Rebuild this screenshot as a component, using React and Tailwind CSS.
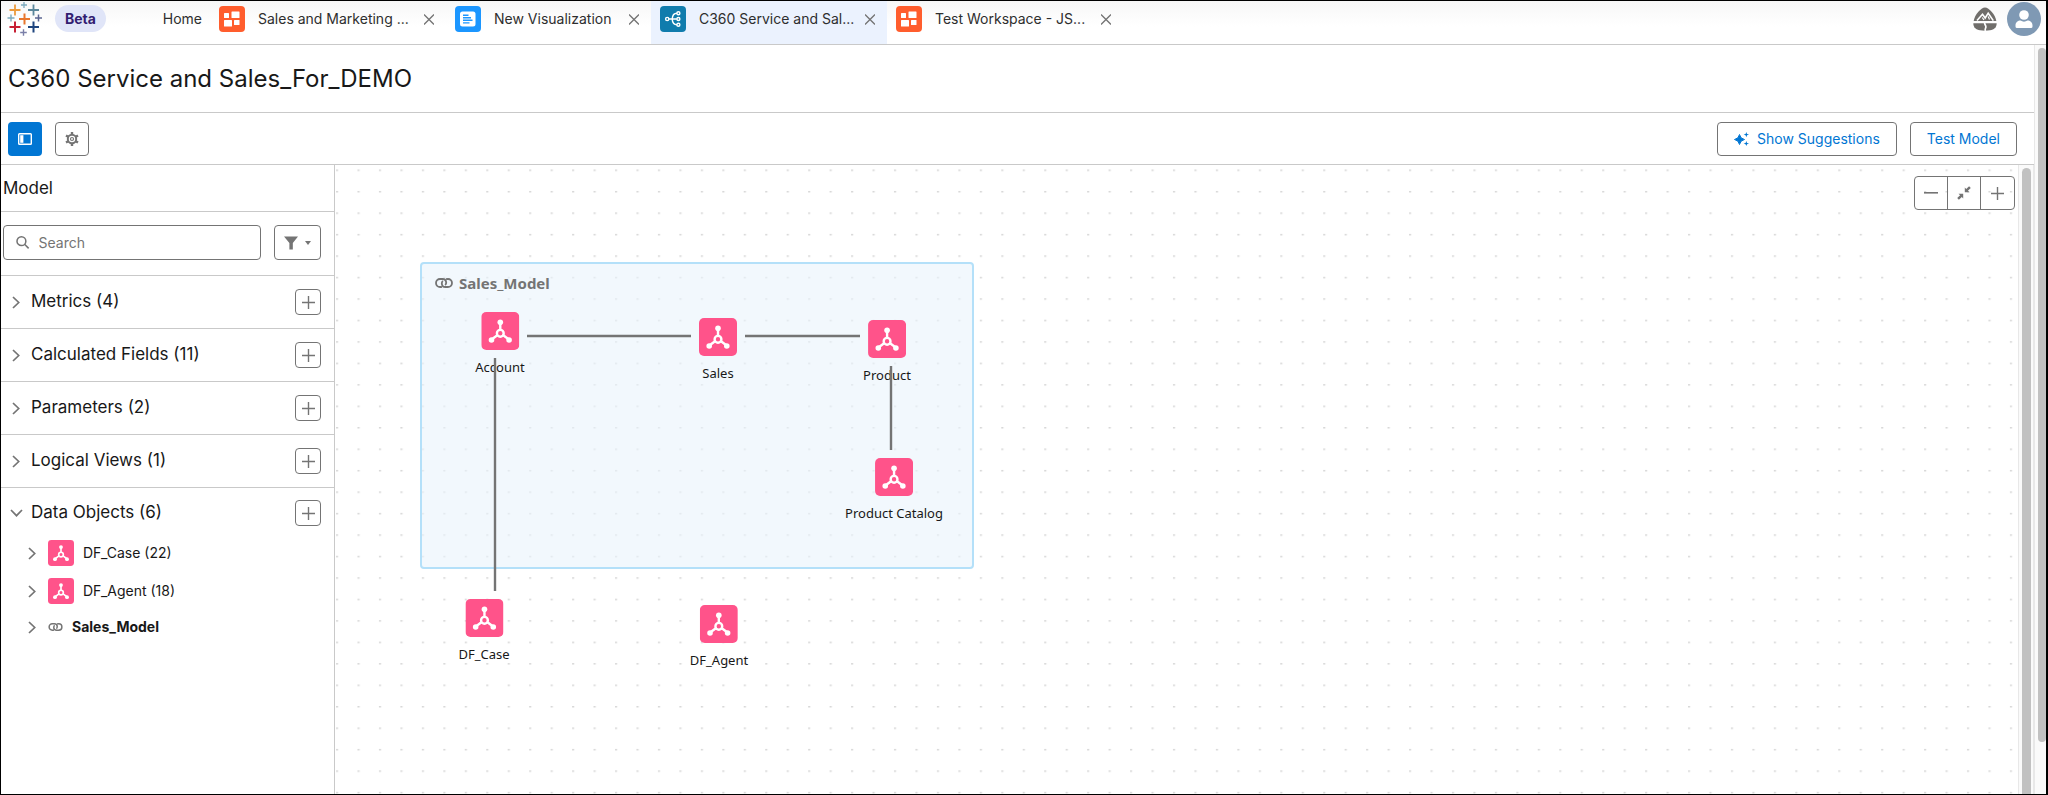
import React, { useState } from "react";

const tabs = [
  { id: 1, label: "Sales and Marketing ...", icon: "workspace" },
  { id: 2, label: "New Visualization", icon: "viz", short: true },
  { id: 3, label: "C360 Service and Sal...", icon: "model" },
  { id: 4, label: "Test Workspace - JS...", icon: "workspace" },
];

const sections = [
  { name: "Metrics", count: 4 },
  { name: "Calculated Fields", count: 11 },
  { name: "Parameters", count: 2 },
  { name: "Logical Views", count: 1 },
];

const nodes = [
  { name: "Account", x: 165, y: 147 },
  { name: "Sales", x: 383, y: 153 },
  { name: "Product", x: 552, y: 155 },
  { name: "Product Catalog", x: 559, y: 293 },
  { name: "DF_Case", x: 149, y: 434 },
  { name: "DF_Agent", x: 384, y: 440 },
];

const edges = [
  { x1: 192, y1: 171, x2: 356, y2: 171 },
  { x1: 410, y1: 171, x2: 525, y2: 171 },
  { x1: 160, y1: 193, x2: 160, y2: 426 },
  { x1: 556, y1: 201, x2: 556, y2: 285 },
];

const logoMarks = [
  { x: 17, y: 4, r: 3, w: 1.3, color: "#7ba9bd" },
  { x: 8, y: 9, r: 5.5, w: 1.8, color: "#eb9a3c" },
  { x: 26.5, y: 9, r: 5.5, w: 1.8, color: "#5b879b" },
  { x: 4, y: 17, r: 3.5, w: 1.4, color: "#7ba9bd" },
  { x: 17.5, y: 18, r: 5.5, w: 2, color: "#e8762c" },
  { x: 31.5, y: 17, r: 3.5, w: 1.5, color: "#5b6591" },
  { x: 8, y: 26, r: 5.5, w: 2, color: "#c72035" },
  { x: 26.5, y: 26, r: 5.5, w: 2, color: "#1f457e" },
  { x: 16.5, y: 31.5, r: 3.3, w: 1.4, color: "#7a7fa8" },
];

const Logo = () => (
  <svg width="36" height="36" viewBox="0 0 36 36" aria-hidden="true">
    {logoMarks.map((m) => (
      <path
        key={`${m.x}-${m.y}`}
        d={`M${m.x - m.r} ${m.y}H${m.x + m.r}M${m.x} ${m.y - m.r}V${m.y + m.r}`}
        stroke={m.color}
        strokeWidth={m.w}
      />
    ))}
  </svg>
);

const WorkspaceIcon = () => (
  <svg width="26" height="26" viewBox="0 0 26 26" className="shrink-0" aria-hidden="true">
    <rect width="26" height="26" rx="4" fill="#ff5d2d" />
    <g fill="#fff">
      <rect x="5" y="7" width="5" height="5" rx="0.5" />
      <rect x="12.5" y="5.5" width="8" height="6.5" rx="0.5" />
      <rect x="5" y="14" width="8" height="6.5" rx="0.5" />
      <rect x="15" y="14" width="5.5" height="5" rx="0.5" />
    </g>
  </svg>
);

const VizIcon = () => (
  <svg width="26" height="26" viewBox="0 0 26 26" className="shrink-0" aria-hidden="true">
    <rect width="26" height="26" rx="4" fill="#1b96ff" />
    <rect x="5" y="5.5" width="15.5" height="15" rx="2.5" fill="#fff" />
    <path
      d="M8 9.2H13.5M8 11.8H16M8 14.3H17.5M8 16.9H14.5"
      stroke="#1b96ff"
      strokeWidth="1.4"
    />
  </svg>
);

const ModelIcon = () => (
  <svg width="26" height="26" viewBox="0 0 26 26" className="shrink-0" aria-hidden="true">
    <rect width="26" height="26" rx="4" fill="#107cad" />
    <g fill="none" stroke="#fff" strokeWidth="1.4">
      <circle cx="7.2" cy="13" r="1.6" />
      <circle cx="18.4" cy="7.2" r="1.5" />
      <circle cx="18.4" cy="13" r="1.5" />
      <circle cx="18.4" cy="18.8" r="1.5" />
      <path d="M9 13H16.8M17 7.2C13.5 7.2 12.4 9 12.2 13C12.4 17 13.5 18.8 17 18.8" />
    </g>
  </svg>
);

const tabIcons = { workspace: WorkspaceIcon, viz: VizIcon, model: ModelIcon };

const ObjectIcon = ({ size }) => (
  <svg width={size} height={size} viewBox="0 0 38 38" className="block shrink-0" aria-hidden="true">
    <rect width="38" height="38" rx="5" fill="#ff538a" />
    <g stroke="#fff" strokeWidth="2.4" fill="none">
      <circle cx="19" cy="21.3" r="3.4" />
      <path d="M19 17.8V10M16 23.3L10 27.8M22 23.3L28 27.8" />
    </g>
    <g fill="#fff">
      <circle cx="19" cy="10.3" r="2.8" />
      <circle cx="10.2" cy="28" r="2.8" />
      <circle cx="27.8" cy="28" r="2.8" />
    </g>
  </svg>
);

const LinkIcon = ({ className }) => (
  <svg viewBox="0 0 18 10" className={className} fill="none" stroke="currentColor" strokeWidth="1.8" aria-hidden="true">
    <path d="M7 8.8C6.3 9 5.8 9 5 9A4 4 0 0 1 5 1H7.5C10 1 11.2 2.8 11.2 4.8C11.2 5.8 10.8 6.6 10 7" />
    <path d="M11 1.2C11.7 1 12.2 1 13 1A4 4 0 0 1 13 9H10.5C8 9 6.8 7.2 6.8 5.2C6.8 4.2 7.2 3.4 8 3" />
  </svg>
);

const Chevron = ({ open }) =>
  open ? (
    <svg width="13" height="8" viewBox="0 0 13 8" fill="none" stroke="#747474" strokeWidth="1.7" aria-hidden="true">
      <path d="M1 1L6.5 6.7L12 1" />
    </svg>
  ) : (
    <svg width="8" height="13" viewBox="0 0 8 13" fill="none" stroke="#747474" strokeWidth="1.7" aria-hidden="true">
      <path d="M1 1L6.7 6.5L1 12" />
    </svg>
  );

const Plus = () => (
  <svg width="13" height="13" viewBox="0 0 13 13" stroke="#747474" strokeWidth="1.4" aria-hidden="true">
    <path d="M6.5 0V13M0 6.5H13" />
  </svg>
);

const Tab = ({ tab, active, onSelect }) => {
  const Icon = tabIcons[tab.icon];
  return (
    <div className={`flex h-full items-start pt-[5px] pl-[9px] pr-3 ${active ? "bg-[#ebf2fe]" : ""}`}>
      <button
        onClick={() => onSelect(tab.id)}
        className={`flex items-center gap-[13px] whitespace-nowrap text-left ${tab.short ? "w-[174px]" : "w-[205px]"}`}
      >
        <Icon />
        <span>{tab.label}</span>
      </button>
      <button aria-label={`Close ${tab.label}`} className="flex h-[26px] w-[10px] items-center">
        <svg width="10" height="11" viewBox="0 0 10 11" stroke="#747474" strokeWidth="1.3" aria-hidden="true">
          <path d="M0 0.5L10 10.5M10 0.5L0 10.5" />
        </svg>
      </button>
    </div>
  );
};

const TopBar = () => {
  const [activeTab, setActiveTab] = useState(3);

  return (
    <header className="flex h-11 shrink-0 items-start border-b border-[#c9c9c9] bg-linear-to-b from-[#f7f7f7] to-white to-60% text-sm text-[#2e2e2e]">
      <div className="flex w-[209px] items-start pl-[6px]">
        <Logo />
        <span className="ml-3 mt-1 flex h-[27px] items-center rounded-full bg-[#e0e5f8] px-[10px] font-bold text-[#321d71]">
          Beta
        </span>
        <a href="#home" className="ml-auto mr-2 pt-2">
          Home
        </a>
      </div>
      <nav className="flex h-full">
        {tabs.map((tab) => (
          <Tab key={tab.id} tab={tab} active={tab.id === activeTab} onSelect={setActiveTab} />
        ))}
      </nav>
      <div className="ml-auto flex items-center gap-[10px] pr-[5px] pt-px">
        <button aria-label="Guidance">
          <svg width="24" height="24" viewBox="0 0 24 24" className="block" aria-hidden="true">
            <path d="M12 0.5C16 0.5 22.5 8 23.3 14H0.7C1.5 8 8 0.5 12 0.5Z" fill="#706e6b" />
            <path d="M0.3 16.2H23.7C23.7 20.5 21 22.5 17 23.3C14 23.8 10 23.8 7 23.3C3 22.5 0.3 20.5 0.3 16.2Z" fill="#706e6b" />
            <path d="M4 13.6L9.5 7.2L12.2 11L15.2 6.2L20.3 13.6" fill="none" stroke="#fff" strokeWidth="1.6" />
            <path d="M9.3 10.5L11 13M15.2 9.5L16.5 12.5" stroke="#fff" strokeWidth="1.2" />
            <path d="M12 15C10.5 17.5 14 18.5 12.6 21C12.2 22 12 23 12.4 24" fill="none" stroke="#fff" strokeWidth="1.7" />
          </svg>
        </button>
        <button aria-label="Profile">
          <svg width="34" height="34" viewBox="0 0 34 34" className="block" aria-hidden="true">
            <circle cx="17" cy="17" r="17" fill="#7f99b4" />
            <circle cx="17" cy="13" r="4.8" fill="#fff" />
            <path d="M8.5 23.5C8.5 20 11 18.5 13.5 18.5C15.5 20 18.5 20 20.5 18.5C23 18.5 25.5 20 25.5 23.5V24.5Q25.5 26 24 26H10Q8.5 26 8.5 24.5Z" fill="#fff" />
          </svg>
        </button>
      </div>
    </header>
  );
};

const Toolbar = () => (
  <div className="flex h-[52px] shrink-0 items-center gap-[13px] border-b border-[#c9c9c9] pl-[7px] pr-[17px] text-sm">
    <button
      aria-label="Toggle model panel"
      className="flex size-[34px] items-center justify-center rounded bg-[#0176d3]"
    >
      <svg width="14" height="12" viewBox="0 0 14 12" aria-hidden="true">
        <rect x="0.7" y="0.7" width="12.6" height="10.6" rx="0.8" fill="none" stroke="#fff" strokeWidth="1.4" />
        <rect x="2.2" y="2.2" width="3.2" height="7.6" fill="#fff" />
      </svg>
    </button>
    <button
      aria-label="Settings"
      className="flex size-[34px] items-center justify-center rounded border border-[#747474]"
    >
      <svg width="14" height="14" viewBox="0 0 14 14" fill="none" stroke="#747474" aria-hidden="true">
        <circle cx="7" cy="7" r="4.2" strokeWidth="2" />
        <circle cx="7" cy="7" r="1.5" strokeWidth="1.2" />
        <path
          d="M7 0V2.6M7 11.4V14M1 3.5L3.2 4.8M10.8 9.2L13 10.5M13 3.5L10.8 4.8M3.2 9.2L1 10.5"
          strokeWidth="2.4"
        />
      </svg>
    </button>
    <button className="ml-auto flex h-[34px] items-center gap-2 rounded border border-[#747474] px-4 text-[#0176d3]">
      <svg width="15" height="14" viewBox="0 0 15 14" fill="#0176d3" aria-hidden="true">
        <path d="M5.5 2.5Q6.3 6.7 10.5 7.5Q6.3 8.3 5.5 12.5Q4.7 8.3 0.5 7.5Q4.7 6.7 5.5 2.5Z" stroke="#0176d3" strokeWidth="1" />
        <path d="M12.3 0L13 1.9L15 2.6L13 3.3L12.3 5.2L11.6 3.3L9.6 2.6L11.6 1.9Z" />
        <path d="M12.3 9L13 10.9L15 11.6L13 12.3L12.3 14L11.6 12.3L9.6 11.6L11.6 10.9Z" />
      </svg>
      Show Suggestions
    </button>
    <button className="h-[34px] rounded border border-[#747474] px-4 text-[#0176d3]">
      Test Model
    </button>
  </div>
);

const Section = ({ name, count, open }) => (
  <div className={`flex items-center pr-[13px] ${open ? "h-[50px]" : "h-[53px] border-b border-[#c9c9c9]"}`}>
    <button className="flex items-center" aria-expanded={open ? "true" : "false"}>
      <span className="flex w-[30px] justify-center">
        <Chevron open={open} />
      </span>
      {name} ({count})
    </button>
    <button
      aria-label={`Add ${name}`}
      className="ml-auto flex size-[26px] items-center justify-center rounded border border-[#747474]"
    >
      <Plus />
    </button>
  </div>
);

const Sidebar = () => (
  <aside className="flex w-[334px] shrink-0 flex-col border-r border-[#c9c9c9] text-[17px] text-[#181818]">
    <h2 className="flex h-[47px] items-center border-b border-[#c9c9c9] pl-[2px] pt-px">Model</h2>
    <div className="flex gap-[13px] border-b border-[#c9c9c9] pb-[15px] pl-[2px] pr-[13px] pt-[13px]">
      <label className="flex h-[35px] flex-1 items-center gap-[9px] rounded border border-[#747474] px-3">
        <svg width="15" height="15" viewBox="0 0 15 15" fill="none" stroke="#747474" strokeWidth="1.7" aria-hidden="true">
          <circle cx="6" cy="6" r="4.9" />
          <path d="M9.5 9.5L14 14" />
        </svg>
        <input
          type="text"
          aria-label="Search"
          placeholder="Search"
          className="w-full bg-transparent text-sm outline-none placeholder:text-[#747474]"
        />
      </label>
      <button
        aria-label="Filter"
        className="flex h-[35px] w-[47px] items-center justify-center gap-[7px] rounded border border-[#747474]"
      >
        <svg width="14" height="14" viewBox="0 0 13 13" fill="#747474" aria-hidden="true">
          <path d="M0 0.5H13L8.2 6.5V12.5H5V6.5Z" />
        </svg>
        <svg width="6" height="4" viewBox="0 0 6 4" fill="#747474" aria-hidden="true">
          <path d="M0 0H6L3 4Z" />
        </svg>
      </button>
    </div>
    {sections.map((section) => (
      <Section key={section.name} name={section.name} count={section.count} />
    ))}
    <Section name="Data Objects" count={6} open />
    <ul className="flex flex-col gap-2 pl-[27px] text-sm">
      <li>
        <button className="flex h-[30px] items-center">
          <Chevron />
          <span className="ml-3 mr-[9px]">
            <ObjectIcon size={26} />
          </span>
          DF_Case (22)
        </button>
      </li>
      <li>
        <button className="flex h-[30px] items-center">
          <Chevron />
          <span className="ml-3 mr-[9px]">
            <ObjectIcon size={26} />
          </span>
          DF_Agent (18)
        </button>
      </li>
      <li>
        <button className="flex h-[26px] items-center font-bold">
          <Chevron />
          <LinkIcon className="ml-3 mr-[9px] h-2 w-[15px] text-[#747474]" />
          Sales_Model
        </button>
      </li>
    </ul>
  </aside>
);

const Node = ({ node }) => (
  <button
    className="absolute flex -translate-x-1/2 flex-col items-center gap-[7px] whitespace-nowrap"
    style={{ left: node.x, top: node.y }}
  >
    <ObjectIcon size={38} />
    <span className="leading-5">{node.name}</span>
  </button>
);

const Canvas = () => (
  <main className="relative flex-1 overflow-hidden font-['Noto_Sans',sans-serif] text-[13px] text-[#181818]">
    <svg className="absolute inset-0 size-full" aria-hidden="true">
      <defs>
        <pattern id="dots" x="1" y="4.5" width="21.46" height="21.46" patternUnits="userSpaceOnUse">
          <rect width="2.2" height="1.5" fill="#d8d8d8" />
        </pattern>
      </defs>
      <rect width="100%" height="100%" fill="url(#dots)" />
    </svg>

    <section className="absolute left-[85px] top-[97px] h-[307px] w-[554px] rounded border-2 border-[#b4e0f9] bg-[#e9f3fc]/60">
      <h3 className="flex items-center gap-[6px] pl-[13px] pt-[9px] text-[15px] font-bold leading-5 text-[#747474]">
        <LinkIcon className="h-[10px] w-[18px]" />
        Sales_Model
      </h3>
    </section>

    {nodes.map((node) => (
      <Node key={node.name} node={node} />
    ))}

    {/* Relationships sit above the node labels */}
    <svg className="pointer-events-none absolute inset-0 size-full" aria-hidden="true">
      {edges.map((edge) => (
        <line key={`${edge.x1}-${edge.y1}`} {...edge} stroke="#747474" strokeWidth="2.4" />
      ))}
    </svg>

    <div className="absolute right-[3px] top-[11px] flex h-[34px] divide-x divide-[#747474] rounded border border-[#747474]">
      <button aria-label="Zoom out" className="flex w-[33px] items-center justify-center">
        <svg width="14" height="2" viewBox="0 0 14 2" aria-hidden="true">
          <rect width="14" height="1.6" fill="#747474" />
        </svg>
      </button>
      <button aria-label="Fit to view" className="flex w-[33px] items-center justify-center">
        <svg width="14" height="14" viewBox="0 0 14 14" fill="#747474" aria-hidden="true">
          <path d="M7.8 1.5V6.2H12.5L10.9 4.8L13.8 1.9L12.1 0.2L9.2 3.1Z" />
          <path d="M6.2 12.5V7.8H1.5L3.1 9.2L0.2 12.1L1.9 13.8L4.8 10.9Z" />
        </svg>
      </button>
      <button aria-label="Zoom in" className="flex w-[33px] items-center justify-center">
        <Plus />
      </button>
    </div>
  </main>
);

const App = () => {
  return (
    <div className="flex h-screen flex-col border border-black border-r-2 bg-white font-[Inter,sans-serif]">
      <TopBar />
      <div className="flex min-h-0 flex-1">
        <div className="flex min-w-0 flex-1 flex-col">
          <h1 className="flex h-[68px] shrink-0 items-center border-b border-[#c9c9c9] pl-[7px] pt-px text-2xl text-[#181818]">
            C360 Service and Sales_For_DEMO
          </h1>
          <Toolbar />
          <div className="flex min-h-0 flex-1">
            <Sidebar />
            <Canvas />
            <div className="w-4 shrink-0 border-x border-[#e8e8e8] bg-[#fafafa] pl-[3px] pt-[3px]">
              <div className="h-full w-[9px] rounded-t-full bg-[#c1c1c1]" />
            </div>
          </div>
        </div>
        <div className="w-3 shrink-0 border-l border-[#e8e8e8] bg-[#fafafa] pl-[3px] pt-[3px]">
          <div className="h-[93%] w-2 rounded-full bg-[#c1c1c1]" />
        </div>
      </div>
    </div>
  );
};

export default App;
